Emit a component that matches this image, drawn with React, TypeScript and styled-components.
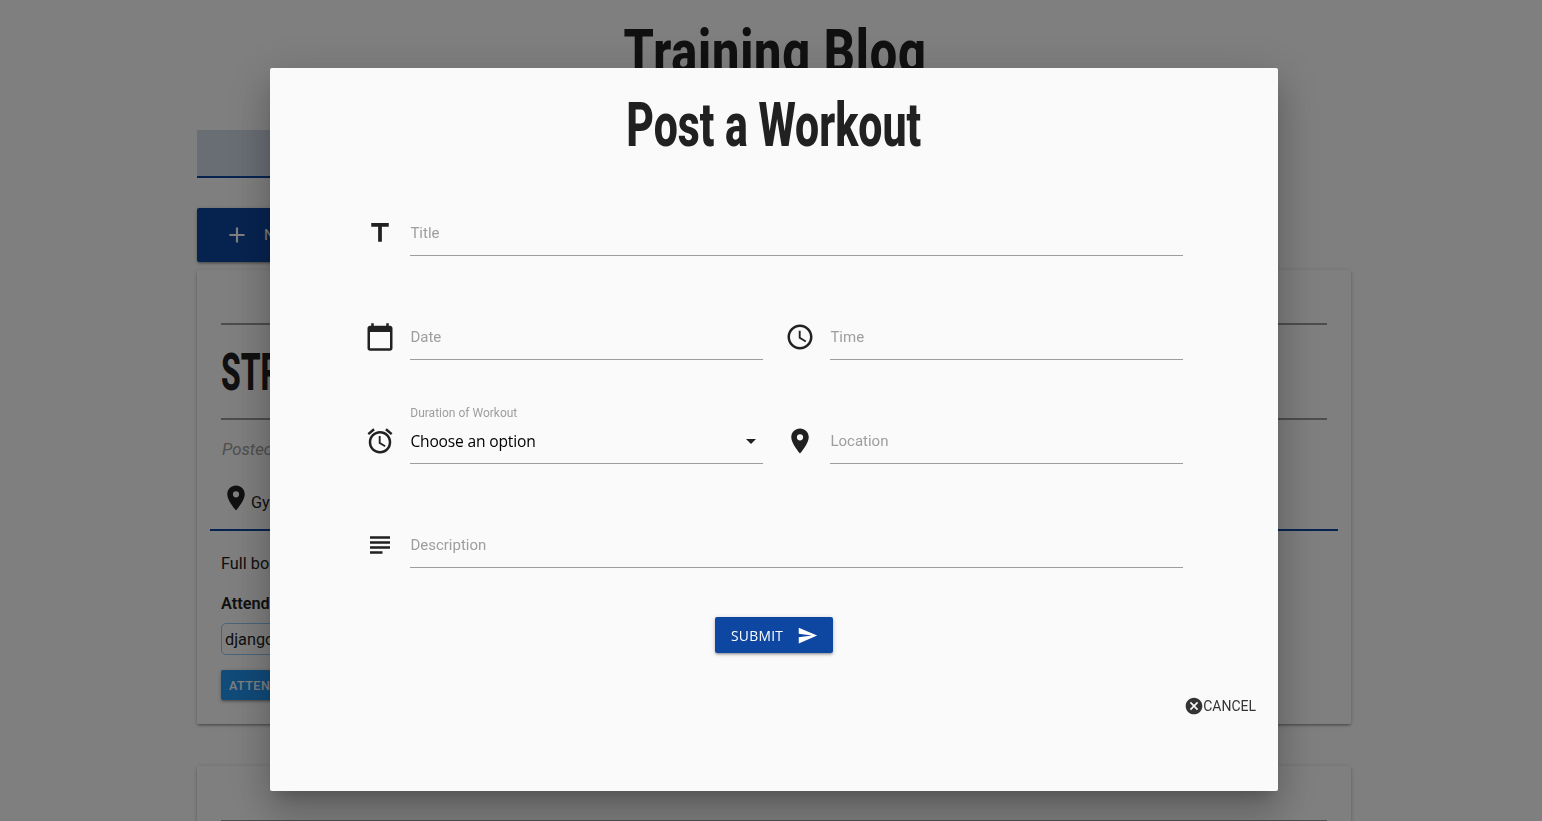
import React from "react";
import styled, { createGlobalStyle, css } from "styled-components";
import {
  MdAccessAlarm,
  MdAccessTime,
  MdAdd,
  MdCalendarToday,
  MdCancel,
  MdPlace,
  MdSend,
  MdSubject,
  MdTitle,
} from "react-icons/md";

const NAVY = "#0d47a1";
const INK = "#212121";
const z1 =
  "0 2px 2px 0 rgba(0,0,0,.14), 0 3px 1px -2px rgba(0,0,0,.12), 0 1px 5px 0 rgba(0,0,0,.2)";

const GlobalStyle = createGlobalStyle`
  *, *::before, *::after { box-sizing: border-box; }
  body {
    margin: 0;
    background: #fff;
    color: ${INK};
    font: 400 15px/1.5 Roboto, "Liberation Sans", sans-serif;
  }
`;

const condensed = css`
  display: inline-block;
  font-family: Roboto, sans-serif;
  font-weight: 800;
  white-space: nowrap;
  color: ${INK};
`;

const Page = styled.div`
  width: 1548px;
  height: 821px;
  overflow: hidden;
`;

const Container = styled.main`
  width: 1154px;
  margin: 0 197px;
`;

const Masthead = styled.header`
  display: flex;
  justify-content: center;
  height: 130px;
  padding: 14px 0 0 2px;
`;

const Heading = styled.h1<{ $squeeze: number; $spacing?: number }>`
  ${condensed}
  margin: 0;
  font-size: 62px;
  line-height: 76px;
  letter-spacing: ${(p) => p.$spacing ?? 0}px;
  transform: scaleX(${(p) => p.$squeeze});
`;

const Nav = styled.nav`
  width: 577px;
  height: 48px;
  background: #d3dcea;
  border-bottom: 2px solid ${NAVY};
`;

const NewButton = styled.button`
  display: flex;
  align-items: center;
  gap: 14px;
  width: 220px;
  height: 54px;
  margin: 30px 0 8px;
  padding: 0 27px;
  border: 0;
  border-radius: 2px;
  background: ${NAVY};
  color: #fff;
  font: 400 15px Roboto, sans-serif;
  letter-spacing: 0.5px;
  box-shadow: ${z1};
  svg { font-size: 26px; }
`;

const Card = styled.article<{ $top?: number }>`
  height: 454px;
  margin-bottom: 42px;
  padding: ${(p) => p.$top ?? 53}px 24px 0;
  border-radius: 2px;
  background: #fff;
  box-shadow: ${z1};
  font-size: 16.3px;
  line-height: 24px;
`;

const TitleBand = styled.div`
  height: 97px;
  padding-top: 17px;
  border-top: 2px solid #9a9a9a;
  border-bottom: 2px solid #9a9a9a;
`;

const CardTitle = styled.h2`
  ${condensed}
  margin: 0;
  font-size: 52px;
  line-height: 62px;
  transform: scaleX(0.61);
  transform-origin: left;
`;

const Posted = styled.p`
  margin: 17px 0 1px 1px;
  color: #9e9e9e;
  font-size: 16.8px;
  font-style: italic;
`;

const Place = styled.div`
  display: flex;
  align-items: center;
  height: 69px;
  margin: 0 -11px 0 -11px;
  padding: 15px 0 0 11px;
  border-bottom: 2px solid ${NAVY};
  svg { margin: -10px 0 0; font-size: 30px; }
`;

const Copy = styled.p`
  margin: 21px 0 0;
`;

const Attendees = styled.p`
  margin: 16px 0 7px;
  font-weight: 600;
`;

const Chip = styled.span`
  display: block;
  width: 120px;
  height: 32px;
  padding: 4px 3px;
  border: 1px solid #90caf9;
  border-radius: 5px;
`;

const AttendButton = styled.button`
  display: block;
  width: 90px;
  height: 30px;
  margin-top: 15px;
  padding: 1px 8px 0;
  border: 0;
  border-radius: 2px;
  background: #2196f3;
  color: #fff;
  font: 500 12.5px Roboto, sans-serif;
  letter-spacing: 0.5px;
  text-align: left;
  box-shadow: ${z1};
`;

const Overlay = styled.div`
  position: fixed;
  inset: 0;
  background: rgba(0, 0, 0, 0.5);
`;

const Modal = styled.section`
  position: fixed;
  top: 68px;
  left: 270px;
  display: flex;
  flex-direction: column;
  align-items: center;
  width: 1008px;
  height: 723px;
  padding: 19px 22px 0;
  border-radius: 2px;
  background: #fafafa;
  box-shadow: 0 24px 38px 3px rgba(0,0,0,.14), 0 9px 46px 8px rgba(0,0,0,.12),
    0 11px 15px -7px rgba(0,0,0,.2);
`;

const Form = styled.form`
  display: grid;
  grid-template-columns: 398px 398px;
  column-gap: 22px;
  width: 818px;
  margin: 41px 0 0;
`;

const FieldBox = styled.div<{ $wide?: boolean }>`
  display: grid;
  grid-template-columns: 45px 1fr;
  grid-column: ${(p) => (p.$wide ? "1 / -1" : "auto")};
  height: 104px;
  > svg { margin-top: 14px; font-size: 30px; }
`;

const Line = styled.div<{ $filled?: boolean }>`
  position: relative;
  display: flex;
  align-items: center;
  justify-content: space-between;
  height: 52px;
  padding: 6px 0 0 0.4px;
  border-bottom: 1px solid #9e9e9e;
  color: ${(p) => (p.$filled ? "#000" : "#9e9e9e")};
  font: ${(p) =>
    p.$filled ? '400 15.6px "Open Sans", sans-serif' : "400 15px Roboto, sans-serif"};
  letter-spacing: ${(p) => (p.$filled ? "-0.18px" : "normal")};
`;

const FloatLabel = styled.label`
  position: absolute;
  top: -7px;
  left: 0.3px;
  color: #9e9e9e;
  font: 400 12px/16px Roboto, sans-serif;
  letter-spacing: normal;
`;

const Caret = styled.i`
  margin: 2px 7px 0 0;
  border: 5px solid transparent;
  border-top-color: ${INK};
  border-bottom: 0;
`;

const Submit = styled.button`
  display: flex;
  align-items: center;
  justify-content: space-between;
  width: 118px;
  height: 36px;
  margin-top: -3px;
  padding: 0 15px 0 16px;
  border: 0;
  border-radius: 2px;
  background: ${NAVY};
  color: #fff;
  font: 400 13.8px "Open Sans", sans-serif;
  letter-spacing: 0.3px;
  box-shadow: ${z1};
  svg { font-size: 21px; }
`;

const Cancel = styled.button`
  display: flex;
  align-items: center;
  align-self: flex-end;
  height: 36px;
  margin-top: 35px;
  padding: 0;
  border: 0;
  background: transparent;
  color: #343434;
  font: 400 14px Roboto, sans-serif;
  svg { margin-right: -1px; font-size: 20px; }
`;

interface FieldProps {
  icon: React.ReactNode;
  text: string;
  label?: string;
  wide?: boolean;
}

const Field = ({ icon, text, label, wide }: FieldProps) => (
  <FieldBox $wide={wide}>
    {icon}
    <Line $filled={!!label}>
      {label && <FloatLabel>{label}</FloatLabel>}
      <span>{text}</span>
      {label && <Caret />}
    </Line>
  </FieldBox>
);

export default function App() {
  return (
    <Page>
      <GlobalStyle />
      <Container>
        <Masthead>
          <Heading $squeeze={0.785} $spacing={1}>Training Blog</Heading>
        </Masthead>
        <Nav />
        <NewButton>
          <MdAdd />
          NEW
        </NewButton>
        <Card>
          <TitleBand>
            <CardTitle>STR</CardTitle>
          </TitleBand>
          <Posted>Posted</Posted>
          <Place>
            <MdPlace />
            <span>Gym</span>
          </Place>
          <Copy>Full body</Copy>
          <Attendees>Attendees</Attendees>
          <Chip>django</Chip>
          <AttendButton>ATTEND</AttendButton>
        </Card>
        <Card $top={54}>
          <TitleBand />
        </Card>
      </Container>
      <Overlay />
      <Modal role="dialog">
        <Heading $squeeze={0.69}>Post a Workout</Heading>
        <Form>
          <Field wide icon={<MdTitle />} text="Title" />
          <Field icon={<MdCalendarToday />} text="Date" />
          <Field icon={<MdAccessTime />} text="Time" />
          <Field icon={<MdAccessAlarm />} label="Duration of Workout" text="Choose an option" />
          <Field icon={<MdPlace />} text="Location" />
          <Field wide icon={<MdSubject />} text="Description" />
        </Form>
        <Submit>
          SUBMIT
          <MdSend />
        </Submit>
        <Cancel>
          <MdCancel />
          CANCEL
        </Cancel>
      </Modal>
    </Page>
  );
}
